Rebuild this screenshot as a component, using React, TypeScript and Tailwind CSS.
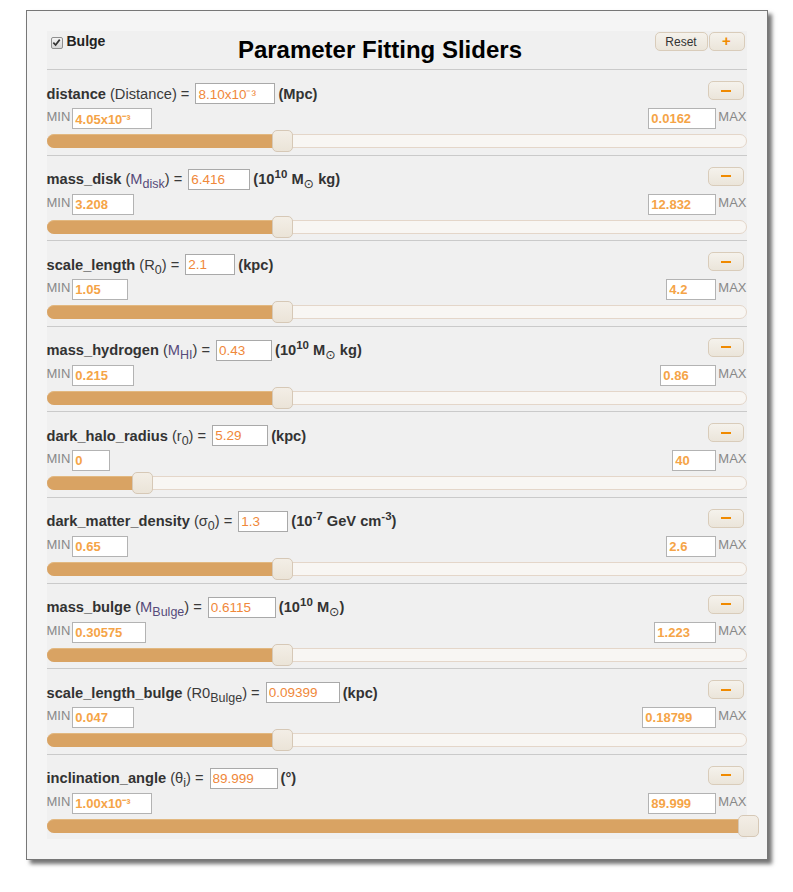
import type { ReactNode } from "react";

type Param = {
  name: string;
  sym: ReactNode;
  symColor: string;
  value: string;
  min: string;
  max: string;
  unit: ReactNode;
  pct: number;
  vw: string;
  minw: string;
  maxw: string;
};

function Sub({ children }: { children: ReactNode }) {
  return <span className="relative top-[4px] text-[12.5px]">{children}</span>;
}

function Sup({ children }: { children: ReactNode }) {
  return <span className="relative -top-[6px] text-[11.5px]">{children}</span>;
}

const sun = (
  <>
    M<span className="relative top-[4px] text-[12.5px] font-['DejaVu_Sans',sans-serif] font-normal">⊙</span>
  </>
);

const params: Param[] = [
  {
    name: "distance",
    sym: <>Distance</>,
    symColor: "text-[#3a3a3a]",
    value: "8.10x10⁻³",
    min: "4.05x10⁻³",
    max: "0.0162",
    unit: <>(Mpc)</>,
    pct: 33.333,
    vw: "w-[80px]",
    minw: "w-[80px]",
    maxw: "w-[68px]",
  },
  {
    name: "mass_disk",
    sym: <>M<Sub>disk</Sub></>,
    symColor: "text-[#564a7a]",
    value: "6.416",
    min: "3.208",
    max: "12.832",
    unit: <>(10<Sup>10</Sup> {sun} kg)</>,
    pct: 33.333,
    vw: "w-[62px]",
    minw: "w-[62px]",
    maxw: "w-[68px]",
  },
  {
    name: "scale_length",
    sym: <>R<Sub>0</Sub></>,
    symColor: "text-[#3a3a3a]",
    value: "2.1",
    min: "1.05",
    max: "4.2",
    unit: <>(kpc)</>,
    pct: 33.333,
    vw: "w-[50px]",
    minw: "w-[56px]",
    maxw: "w-[50px]",
  },
  {
    name: "mass_hydrogen",
    sym: <>M<Sub>HI</Sub></>,
    symColor: "text-[#564a7a]",
    value: "0.43",
    min: "0.215",
    max: "0.86",
    unit: <>(10<Sup>10</Sup> {sun} kg)</>,
    pct: 33.333,
    vw: "w-[56px]",
    minw: "w-[62px]",
    maxw: "w-[56px]",
  },
  {
    name: "dark_halo_radius",
    sym: <>r<Sub>0</Sub></>,
    symColor: "text-[#3a3a3a]",
    value: "5.29",
    min: "0",
    max: "40",
    unit: <>(kpc)</>,
    pct: 13.225,
    vw: "w-[56px]",
    minw: "w-[38px]",
    maxw: "w-[44px]",
  },
  {
    name: "dark_matter_density",
    sym: <>σ<Sub>0</Sub></>,
    symColor: "text-[#3a3a3a]",
    value: "1.3",
    min: "0.65",
    max: "2.6",
    unit: <>(10<Sup>-7</Sup> GeV cm<Sup>-3</Sup>)</>,
    pct: 33.333,
    vw: "w-[50px]",
    minw: "w-[56px]",
    maxw: "w-[50px]",
  },
  {
    name: "mass_bulge",
    sym: <>M<Sub>Bulge</Sub></>,
    symColor: "text-[#564a7a]",
    value: "0.6115",
    min: "0.30575",
    max: "1.223",
    unit: <>(10<Sup>10</Sup> {sun})</>,
    pct: 33.333,
    vw: "w-[68px]",
    minw: "w-[74px]",
    maxw: "w-[62px]",
  },
  {
    name: "scale_length_bulge",
    sym: <>R0<Sub>Bulge</Sub></>,
    symColor: "text-[#3a3a3a]",
    value: "0.09399",
    min: "0.047",
    max: "0.18799",
    unit: <>(kpc)</>,
    pct: 33.333,
    vw: "w-[74px]",
    minw: "w-[62px]",
    maxw: "w-[74px]",
  },
  {
    name: "inclination_angle",
    sym: <>θ<Sub>i</Sub></>,
    symColor: "text-[#3a3a3a]",
    value: "89.999",
    min: "1.00x10⁻³",
    max: "89.999",
    unit: <>(°)</>,
    pct: 100,
    vw: "w-[68px]",
    minw: "w-[80px]",
    maxw: "w-[68px]",
  },
];

const btn =
  "flex items-center justify-center rounded-[5px] border border-[#d9ccba] bg-gradient-to-b from-[#f5f2ec] to-[#ebe5da]";

function Slider({ pct }: { pct: number }) {
  return (
    <div className="relative h-[14px] w-full rounded-full border border-[#e4d6c9] bg-[#f8f6f3]">
      <div
        className="absolute -left-px -top-px h-[14px] rounded-l-full bg-[#d9a363] border-t border-[#e2b880]"
        style={{ width: `calc(${pct}% + 1px)` }}
      />
      <div
        className="absolute -top-[5px] h-[22px] w-[21px] rounded-[5px] border border-[#d6c8b6] bg-gradient-to-b from-[#f3eee6] to-[#ebe4d8]"
        style={{ left: `calc(${pct}% - 8px)` }}
      />
    </div>
  );
}

function Row({ p, last }: { p: Param; last: boolean }) {
  return (
    <div className={`pt-[13px] ${last ? "pb-[6px]" : "pb-[6.6px] border-b border-[#cacaca]"}`}>
      <div className="flex h-[21px] items-start justify-between">
        <div className="flex h-[21px] items-center text-[14.67px] text-[#333] whitespace-nowrap">
          <span className="font-bold">{p.name}</span>
          <span className="ml-[4px] text-[#3a3a3a]">
            (<span className={p.symColor}>{p.sym}</span>) =
          </span>
          <input
            readOnly
            value={p.value}
            className={`${p.vw} ml-[6px] h-[21px] border border-[#a9a9a9] bg-white px-[2px] text-[13.5px] text-[#f0883a] outline-none`}
          />
          <span className="ml-[3px] font-bold">{p.unit}</span>
        </div>
        <button className={`${btn} -mt-[2px] mr-[3px] h-[19px] w-[36px]`}>
          <span className="block h-[2px] w-[10px] bg-[#f08a00]" />
        </button>
      </div>
      <div className="mt-[4px] flex h-[21px] items-start justify-between text-[13px] text-[#888]">
        <div className="flex items-start">
          <span className="mr-[2px] leading-[18px]">MIN</span>
          <input
            readOnly
            value={p.min}
            className={`${p.minw} h-[21px] border border-[#b3b3b3] bg-white px-[2px] text-[13px] font-bold text-[#f5a447] outline-none`}
          />
        </div>
        <div className="flex items-start">
          <input
            readOnly
            value={p.max}
            className={`${p.maxw} h-[21px] border border-[#b3b3b3] bg-white px-[2px] text-[13px] font-bold text-[#f5a447] outline-none`}
          />
          <span className="ml-[2px] leading-[18px]">MAX</span>
        </div>
      </div>
      <div className="mt-[5px]">
        <Slider pct={p.pct} />
      </div>
    </div>
  );
}

export default function App() {
  return (
    <div className="min-h-screen bg-white pt-[10px] font-['Liberation_Sans',Arial,sans-serif]">
      <div className="mx-auto w-[742px] border border-[#777] bg-[#f5f5f5] px-[20px] pt-[20px] pb-[20px] shadow-[4px_4px_4px_rgba(0,0,0,0.55)]">
        <div className="bg-[#f0f0f0]">
          <div className="flex h-[39px] items-start border-b border-[#cacaca]">
            <div className="ml-[4px] mt-[2px] flex items-center">
              <span className="flex h-[12px] w-[12px] items-center justify-center rounded-[2px] border border-[#8f8f8f] bg-gradient-to-b from-[#f4f4f4] to-[#d6d6d6]">
                <svg viewBox="0 0 10 10" className="h-[9px] w-[9px]">
                  <path d="M1.5 5.2 L4 7.8 L8.6 1.8" fill="none" stroke="#333" strokeWidth="1.9" />
                </svg>
              </span>
              <span className="ml-[4px] -mt-[2px] text-[14px] font-bold text-[#222]">Bulge</span>
            </div>
            <div className="flex-1 pt-[5px] text-center text-[24px] font-bold leading-[27px] text-black">
              Parameter Fitting Sliders
            </div>
            <div className="mr-[2px] mt-[1px] flex gap-[1px]">
              <button className={`${btn} h-[19px] w-[53px] text-[12px] text-[#333]`}>Reset</button>
              <button className={`${btn} h-[19px] w-[36px] text-[15px] font-bold text-[#f08a00]`}>+</button>
            </div>
          </div>
          {params.map((p, i) => (
            <Row key={p.name} p={p} last={i === params.length - 1} />
          ))}
        </div>
      </div>
    </div>
  );
}
